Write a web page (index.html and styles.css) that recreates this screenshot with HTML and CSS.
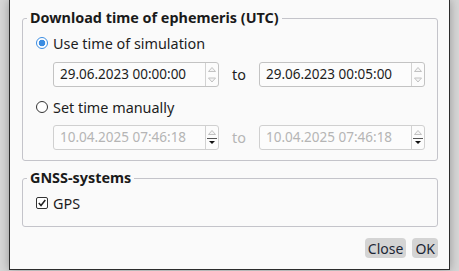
FILE: index.html
```html
<!DOCTYPE html>
<html lang="en">
<head>
    <meta charset="UTF-8">
    <title>Ephemeris download</title>
    <link rel="stylesheet" href="styles.css">
</head>
<body>
    <div class="window">
        <fieldset class="group">
            <legend>Download time of ephemeris (UTC)</legend>
            <div class="group-body">
                <label class="option"><span class="radio on"></span>Use time of simulation</label>
                <div class="range">
                    <div class="spin">
                        <span class="value">29.06.2023 00:00:00</span>
                        <span class="arrows">
                            <svg width="12" height="23" viewBox="0 0 12 23"><polygon points="2.5,8.5 6,4.5 9.5,8.5" fill="#f4f4f4" stroke="#c2c2c2"/><polygon points="2.5,15 6,19 9.5,15" fill="#f4f4f4" stroke="#c2c2c2"/></svg>
                        </span>
                    </div>
                    <span class="to">to</span>
                    <div class="spin">
                        <span class="value">29.06.2023 00:05:00</span>
                        <span class="arrows">
                            <svg width="12" height="23" viewBox="0 0 12 23"><polygon points="2.5,8.5 6,4.5 9.5,8.5" fill="#f4f4f4" stroke="#c2c2c2"/><polygon points="2.5,15 6,19 9.5,15" fill="#f4f4f4" stroke="#c2c2c2"/></svg>
                        </span>
                    </div>
                </div>
                <label class="option"><span class="radio"></span>Set time manually</label>
                <div class="range off">
                    <div class="spin">
                        <span class="value">10.04.2025 07:46:18</span>
                        <span class="arrows">
                            <svg width="12" height="23" viewBox="0 0 12 23"><polygon points="2.5,8.5 6,4.5 9.5,8.5" fill="#f4f4f4" stroke="#c2c2c2"/><line x1="1" y1="12.5" x2="11" y2="12.5" stroke="#555"/><polygon points="3,15 9,15 6,18" fill="#111"/></svg>
                        </span>
                    </div>
                    <span class="to">to</span>
                    <div class="spin">
                        <span class="value">10.04.2025 07:46:18</span>
                        <span class="arrows">
                            <svg width="12" height="23" viewBox="0 0 12 23"><polygon points="2.5,8.5 6,4.5 9.5,8.5" fill="#f4f4f4" stroke="#c2c2c2"/><line x1="1" y1="12.5" x2="11" y2="12.5" stroke="#555"/><polygon points="3,15 9,15 6,18" fill="#111"/></svg>
                        </span>
                    </div>
                </div>
            </div>
        </fieldset>

        <fieldset class="group gnss">
            <legend>GNSS-systems</legend>
            <div class="group-body">
                <label class="option check-row">
                    <span class="check"><svg width="10" height="10" viewBox="0 0 10 10"><polyline points="1.8,5 4,7.5 8.3,2" fill="none" stroke="#222" stroke-width="1.5"/></svg></span>GPS
                </label>
            </div>
        </fieldset>

        <div class="buttons">
            <button class="btn">Close</button>
            <button class="btn">OK</button>
        </div>
    </div>
</body>
</html>
```

FILE: styles.css
```css
* {
    box-sizing: border-box;
}

body {
    margin: 0;
    height: 271px;
    overflow: hidden;
    background: #d6d6d6;
    font-family: "Noto Sans", sans-serif;
    font-size: 14.4px;
    color: #1d1d1d;
}

.window {
    margin-left: 9px;
    width: 441px;
    height: 270px;
    padding: 10px 11px 0 12px;
    background: #fafafa;
    border: 1px solid #2c2c2c;
    border-top: 0;
    box-shadow: 0 0 9px rgba(0, 0, 0, 0.3);
    display: flex;
    flex-direction: column;
}

fieldset.group {
    margin: 0;
    padding: 0;
    min-width: 0;
    border: 1px solid #c4c4ca;
    border-radius: 3px;
}

legend {
    margin-left: 4px;
    padding: 0 3px;
    line-height: 16px;
    font-weight: bold;
    color: #1a1a1a;
}

.group-body {
    display: flex;
    flex-direction: column;
    padding: 7px 11px 10px 13px;
}

.gnss {
    margin-top: 9px !important;
}

.gnss .group-body {
    padding-top: 8px;
    padding-bottom: 14px;
}

.option {
    height: 20px;
    display: flex;
    align-items: center;
    gap: 5px;
}

.check-row {
    height: 18px;
}

.radio {
    width: 12px;
    height: 12px;
    border: 1px solid #333;
    border-radius: 50%;
    background: #fff;
}

.radio.on {
    border-color: #3b8de2;
    background: radial-gradient(circle, #3b8de2 0, #3b8de2 3px, #fff 3.6px);
}

.check {
    width: 12px;
    height: 12px;
    border: 1px solid #333;
    border-radius: 2px;
    background: #fff;
    display: flex;
    align-items: center;
    justify-content: center;
}

.range {
    display: flex;
    align-items: center;
    margin: 9px 0 10px 17px;
}

.range.off {
    margin-top: 8px;
    margin-bottom: 0;
}

.spin {
    width: 166px;
    height: 25px;
    display: flex;
    border: 1px solid #c3c3c3;
    border-radius: 3px;
    background: #fcfcfc;
}

.value {
    flex: 1;
    padding-left: 6px;
    line-height: 23px;
    font-size: 13.5px;
}

.arrows {
    width: 13px;
    border-left: 1px solid #d2d2d2;
    display: flex;
}

.to {
    width: 40px;
    text-align: center;
}

.off .spin {
    border-color: #d0d0d0;
}

.off .value,
.off .to {
    color: #b5b5b5;
}

.buttons {
    margin-top: 11px;
    display: flex;
    justify-content: flex-end;
    gap: 6px;
}

.btn {
    height: 20px;
    padding: 0 3px;
    border: 0;
    border-radius: 4px;
    background: #d4d4d4;
    font-family: "Noto Sans", sans-serif;
    font-size: 14px;
    color: #1c2634;
}
```
